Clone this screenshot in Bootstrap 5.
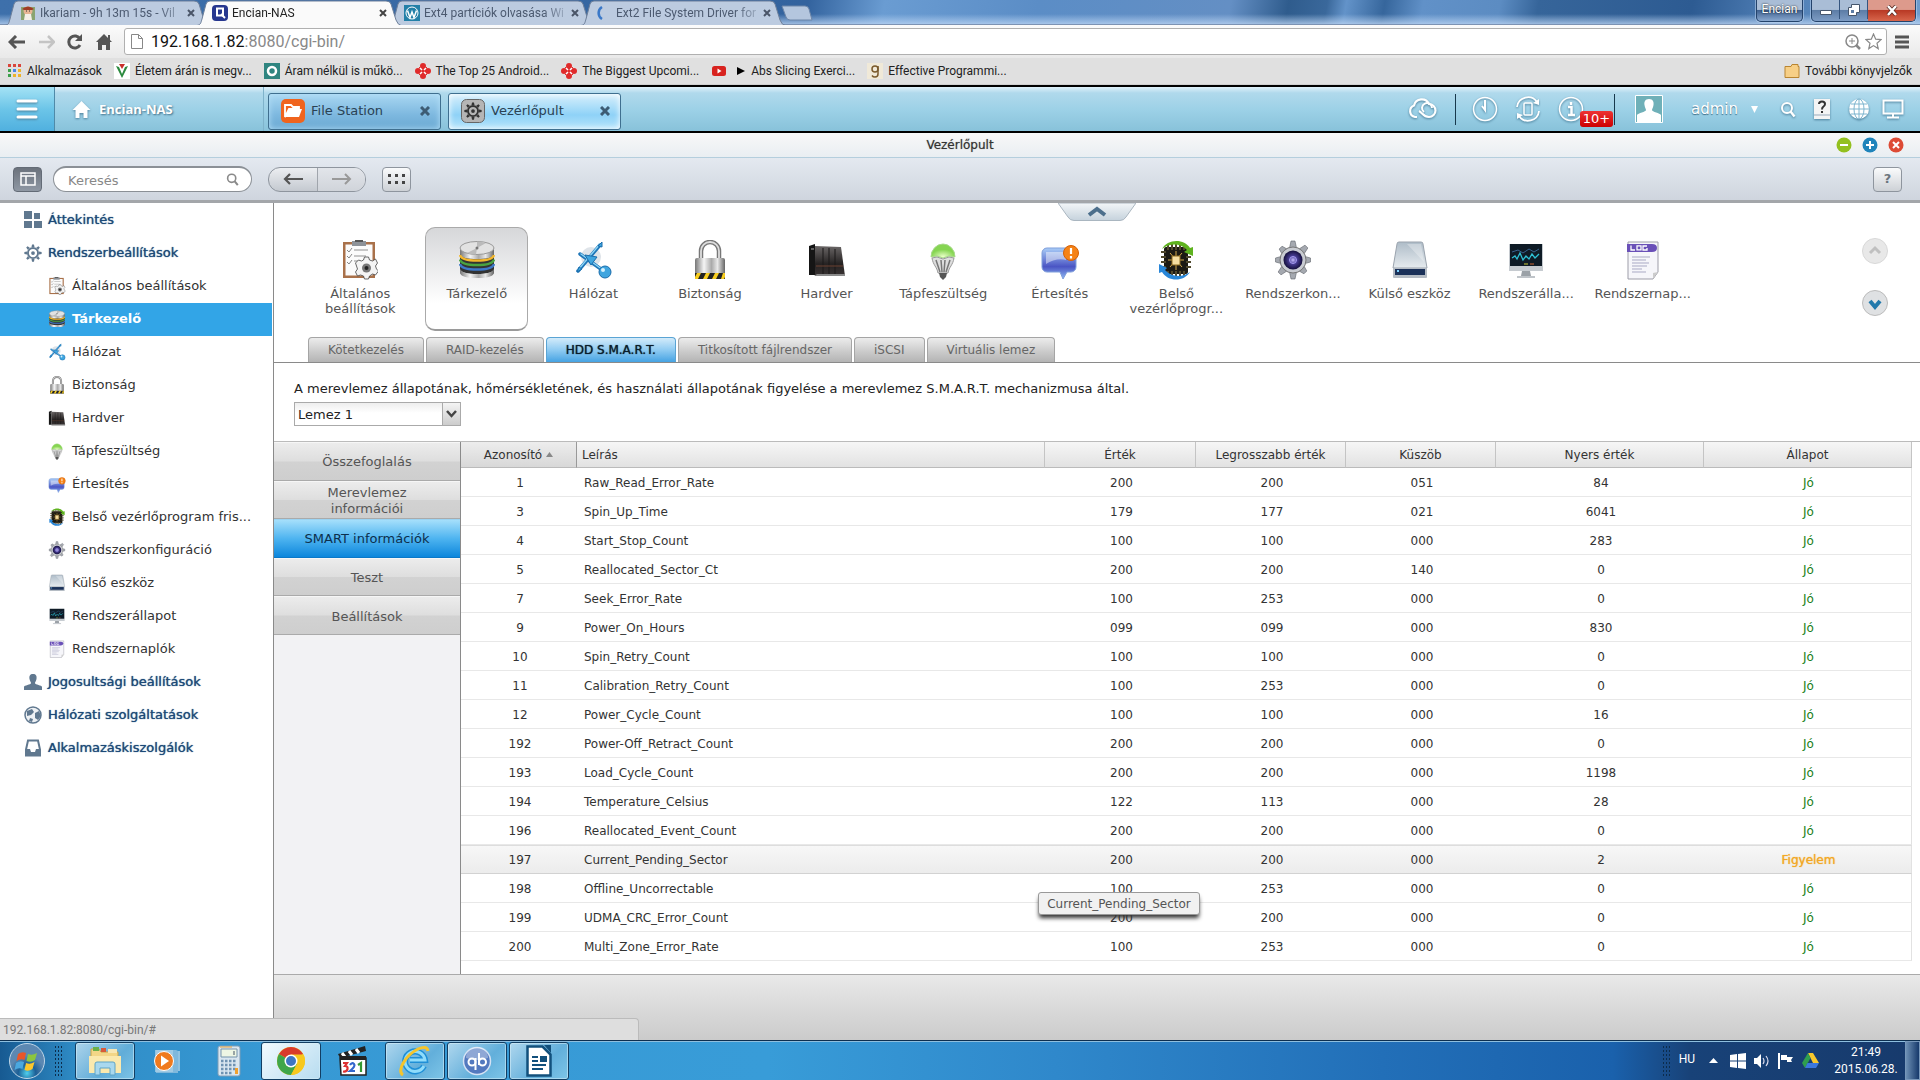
<!DOCTYPE html>
<html lang="hu">
<head>
<meta charset="utf-8">
<meta name="viewport" content="width=device-width, initial-scale=1">
<title>Encian-NAS</title>
<link rel="stylesheet" href="https://cdn.jsdelivr.net/npm/bootstrap@5.3.0/dist/css/bootstrap.min.css">
<style>
:root{--ui:"DejaVu Sans",sans-serif;--chrome:Roboto,"Open Sans",sans-serif}
body{font-family:var(--ui);font-size:13px;line-height:16px;color:#333;background:#fff}
a{color:inherit;text-decoration:none}
button{font-family:inherit}
svg{display:block;flex:none}
.plain{border:0;background:none;padding:0;color:inherit}
/* browser */
.browser-ui{font-family:var(--chrome);font-size:12px}
.tabstrip{height:25px;padding-left:5px;border-bottom:1px solid #7d93b3;background:linear-gradient(180deg,transparent 14px,rgba(190,215,245,.75) 24px),linear-gradient(100deg,#3e70ab 0,#33639e 42%,#6a9cd2 46%,#5b8dc6 54%,#648fc4 64%,#2f5c8d 67%,#3a689b 69%,#6393c9 70%,#36669c 72%,#6191c8 74%,#5c8cc2 78%,#36659a 80%,#2d5b92 88%,#4d7cb3 92%,#6d9ccd 100%)}
.btab{width:204px;height:25px;margin-right:-12px;padding:0 14px 0 15px;color:#4c5a70}
.btab.active{z-index:2;color:#222}
.btab .shape{position:absolute;inset:0;width:100%;height:100%}
.btab>*:not(.shape){position:relative}
.btab .ttl{width:140px;margin-left:4px;white-space:nowrap;-webkit-mask-image:linear-gradient(90deg,#000 85%,rgba(0,0,0,.3))}
.winbtns{height:22px;border:1px solid #24436b;border-top:0;border-radius:0 0 5px 5px;overflow:hidden;box-shadow:0 0 0 1px rgba(200,220,245,.5);background:linear-gradient(#a9bdd6 45%,#5d7da6 50%,#7d9cc4)}
.winbtns button{width:28px;height:19px;border-right:1px solid #35557f}
.winbtns .xbtn{width:47px;height:21px;border:0;background:linear-gradient(#dd9a8c 45%,#b93a25 50%,#d8664c)}
.userbtn{width:47px;height:22px;padding-bottom:4px;line-height:16px;color:#fff;text-shadow:0 0 2px #000;border:1px solid #24436b;border-top:0;border-radius:0 0 5px 5px;background:linear-gradient(#a9bdd6 45%,#3f6190 50%,#8aa9d0);box-shadow:0 0 0 1px rgba(200,220,245,.5)}
.navline{height:33px;padding:0 7px 0 8px;background:linear-gradient(#fbfbfb,#e9e9e9)}
.navicons{width:104px;margin-right:12px}
.omnibox{height:27px;border:1px solid #b0b0b0;border-radius:3px;background:#fff;padding:0 4px 0 6px}
.urlwrap{font-size:16px;line-height:22px;color:#888}
.urlwrap b{font-weight:400;color:#111}
.bookmarks{height:27px;padding:0 8px;background:#e0e0e0;border-bottom:1px solid #d0d0d0;color:#222}
.bookmarks a{gap:5px}
/* NAS desktop bar */
.nasbar{height:48px;border-top:2px solid #000;border-bottom:2px solid #000;background:linear-gradient(#dff1fa 0,#b0d9ec 6px,#9bd0e6 24px,#88c2da 100%);color:#fff}
.menubtn{width:55px;border-right:1px solid #4f8aa8;background:linear-gradient(#a4e2f5,#6cc5e8 50%,#50b0df)}
.homebox{width:209px;padding-left:17px;border-right:1px solid #7fb3cb;font-weight:700;font-size:13px;text-shadow:1px 1px 2px #3c6c86;font-family:"Open Sans",sans-serif}
.tasks{gap:7px}
.taskbtn{width:173px;height:37px;gap:6px;border:1px solid #3f6f8f;border-radius:3px;color:#2a4254;font-size:13px;padding:0 10px 0 12px;background:linear-gradient(#a9d7f2,#7db8df 60%,#6aa8d2);box-shadow:inset 0 0 6px #b5e0f7}
.taskbtn.active{background:linear-gradient(#d8f0fc,#8fd2f7 60%,#b5e4fb);box-shadow:inset 0 0 6px #fff}
.vline{width:1px;height:31px;background:#17384c}
.shadow-ic{filter:drop-shadow(0 1px 1px #4c7f9a)}
.alertbox{padding-right:14px}
.alertcount{left:22px;top:15px;height:16px;line-height:16px;width:33px;font-size:13px;border-radius:3px;background:linear-gradient(#e33,#c00);color:#fff;text-align:center}
.admin{font-size:15px;text-shadow:0 1px 1px #3c6c86}
/* window */
.wtitle{height:25px;border-bottom:1px solid #b4cedd;background:linear-gradient(#f8f8f8,#e9eef2);font-size:12px;color:#333;text-shadow:0 0 1px #888}
.wctl{gap:10px}
.wbar{height:45px;border-bottom:3px solid #a3a6aa;background:linear-gradient(#e4e9f0,#cfd5de);padding:0 18px 0 13px}
.sq{width:29px;height:25px;border:1px solid #8e959e;border-radius:4px;background:linear-gradient(#fafbfc,#cdd1d6)}
.sq.dark{background:linear-gradient(#6b727c,#8f98a4);border-color:#636b76}
.search{width:199px;height:26px;margin-left:11px;border:1px solid #8b9096;border-top-width:2px;border-radius:13px;background:#fff;padding:0 12px 0 14px}
.search input{border:0;outline:0;background:none;width:100%;font-size:13px;padding:2px 0 0}
.search input::placeholder{color:#888;opacity:1}
.navpair{width:98px;height:25px;border:1px solid #8e959e;border-radius:12px;overflow:hidden;background:linear-gradient(#eceef1,#c4c9d0)}
.navpair button+button{border-left:1px solid #a0a5ac;background:linear-gradient(#e2e5ea,#d0d4da)}
.side{width:274px;border-right:1px solid #8a8a8a;padding-top:1px}
.side a{height:33px;gap:6px;white-space:nowrap;padding-bottom:2px}
.side .top{padding-left:24px;color:#1c4a78;text-shadow:0 0 1px #1c4a78}
.side .sub{padding-left:48px}
.side .on{background:#32a5e7;color:#fff;font-weight:700;margin-right:1px}
/* icon grid */
.apps{display:grid;grid-template-columns:repeat(12,1fr);padding:24px 219px 0 28px}
.app{width:103px;height:104px;justify-self:center;padding-top:12px;border:1px solid transparent;border-radius:10px;text-align:center;color:#555;line-height:15px}
.app.on{border-color:#aaa;border-bottom:2px solid #9a9a9a;background:linear-gradient(#d6d7d9,#fff 75%)}
.app svg{margin:0 auto 6px}
.flap{left:50%;transform:translateX(-50%);top:0}
.rounders{right:32px;top:35px;gap:26px}
.stabs{gap:2px;padding:6px 0 0 34px;border-bottom:1px solid #8a8a8a}
.stabs button{height:25px;font-size:12px;padding:0 19px;border:1px solid #a5a5a5;border-bottom:0;border-radius:4px 4px 0 0;background:linear-gradient(#ececec,#c9c9c9 60%,#b4b4b4);color:#666}
.stabs .on{background:linear-gradient(#d3ebfa,#8fcbf2 50%,#46a3e3);color:#0b1d2b;border-color:#5aa4d4;text-shadow:0 0 1px #0b1d2b}
.desc{padding:18px 20px 15px;color:#222}
.pick{width:167px;height:24px;margin-top:5px}
.pick select{width:100%;height:100%;appearance:none;border:1px solid #aaa;border-radius:0;background:linear-gradient(#eee,#fff 10px);padding:0 3px;font:13px var(--ui);color:#222}
.pick span{right:1px;top:1px;bottom:1px;width:18px;border-left:1px solid #aaa;background:linear-gradient(#f4f4f4,#ccc);pointer-events:none}
.split{border-top:1px solid #bbb}
.vtabs{width:187px;border-right:1px solid #8a8a8a;background:#f2f2f4}
.vgrid{display:grid;grid-template-rows:repeat(5,1fr);height:193px}
.vgrid button{border:0;border-bottom:1px solid #aaa;border-top:1px solid #f6f6f6;background:linear-gradient(#ececec,#dedede 49%,#d2d2d2 51%,#cecece);color:#555;line-height:16px;padding:2px 36px 0}
.vgrid .on{background:linear-gradient(#a5dffb,#4eb4f0 50%,#0c86dc);border-color:#9bd3f2 #9bd3f2 #0a78c8;color:#0d2f4d;padding:2px 0 0}
.smart{table-layout:fixed;width:100%;font-size:12px;border-collapse:separate;border-spacing:0;margin:0}
.smart th{height:26px;padding:0;font-weight:400;text-align:center;color:#333;border-bottom:1px solid #bbb;border-right:1px solid #c4c4c4;background:linear-gradient(#f6f6f6,#e2e2e2)}
.smart th.sorted{background:linear-gradient(#ededed,#d8d8d8);border-right-color:#999}
.smart td{height:29px;padding:1px 0 0 2px;text-align:center;color:#333;border-bottom:1px solid #e8e8e8}
.smart td:last-child{border-right:1px solid #e2e2e2}
.smart th:nth-child(2){text-align:left;padding-left:5px}
.smart td:nth-child(2){text-align:left;padding-left:7px}
.smart td.ok{color:#188018}
.smart tr.hov td{background:linear-gradient(#f7f7f7,#ececec);border-top:1px solid #ddd;border-bottom-color:#d2d2d2;padding-top:0}
.smart td.warn{color:#f2a826;text-shadow:0 0 1px #f2a826}
.tip{left:-7px;top:46px;width:162px;height:23px;line-height:22px;background:#f1f1f1;border:1px solid #999;border-radius:3px;box-shadow:0 4px 4px -1px #333;color:#555;z-index:3}
.wfoot{height:66px;border-top:1px solid #aaa;background:linear-gradient(#e9e9e9,#cbcbcb)}
.status{left:0;bottom:0;width:639px;height:22px;padding-left:3px;background:#dedede;border:1px solid #bbb;border-width:1px 1px 0 0;border-radius:0 4px 0 0;color:#777;font:12px/22px var(--chrome)}
/* taskbar */
.taskbar{height:40px;border-top:1px solid #0d2f50;box-shadow:inset 0 1px 0 #8ebfdf;background:linear-gradient(90deg,#175a92 0,#2f8cc6 4%,#3799d4 14%,#389cd8 40%,#2f88cb 55%,#226fb8 72%,#1a61ac 84%,#184278 88%,#173a6c 100%);color:#fff;font-family:var(--chrome);font-size:12px}
.tk{width:60px;height:38px;border:1px solid transparent;border-radius:3px;margin-right:2px;display:flex;align-items:center;justify-content:center;background:none;padding:0}
.tk.run{border-color:#123e63;background:linear-gradient(135deg,#cde6f4cc,#6db4dccc 60%,#8fd0eccc);box-shadow:inset 0 0 0 1px #d8f0fa88}
.tk.front{background:linear-gradient(135deg,#f2fafe,#b7dcf0)}
.grip{width:9px;height:32px;background:radial-gradient(circle,#0c2c4c 1px,transparent 1px) 0 0/3px 4px}
.lang{margin:0 14px 4px 0}
.trayup{margin-right:12px}
.clock{width:78px;line-height:17px;text-align:center}
.peek{width:15px;height:39px;border:1px solid #7797ba;background:linear-gradient(90deg,#6d90b5,#16396b)}
</style>
<script src="https://cdn.jsdelivr.net/npm/bootstrap@5.3.0/dist/js/bootstrap.bundle.min.js"></script>
</head>
<body class="d-flex flex-column min-vh-100">
<svg width="0" height="0" class="position-absolute" aria-hidden="true">
<defs>
<linearGradient id="gm" x1="0" x2="1"><stop offset="0" stop-color="#777"/><stop offset=".3" stop-color="#f5f5f5"/><stop offset=".55" stop-color="#aaa"/><stop offset=".75" stop-color="#e8e8e8"/><stop offset="1" stop-color="#666"/></linearGradient>
<linearGradient id="gv" x2="0" y2="1"><stop offset="0" stop-color="#aebcc8"/><stop offset="1" stop-color="#e6ebef"/></linearGradient>
<linearGradient id="gflap" x2="0" y2="1"><stop offset="0" stop-color="#f3f6f8"/><stop offset="1" stop-color="#c5d2dc"/></linearGradient>
<linearGradient id="ghw" x2="0" y2="1"><stop offset="0" stop-color="#6a6666"/><stop offset=".6" stop-color="#252222"/><stop offset="1" stop-color="#3a3434"/></linearGradient>
<linearGradient id="gbub" x2="0" y2="1"><stop offset="0" stop-color="#a9cdf7"/><stop offset=".6" stop-color="#4a55c4"/><stop offset="1" stop-color="#8fb8f2"/></linearGradient>
<radialGradient id="gbl" cy=".9"><stop offset="0" stop-color="#eaffc8"/><stop offset="1" stop-color="#86d552"/></radialGradient>
<radialGradient id="gorb" cy=".85"><stop offset="0" stop-color="#4fd0ee"/><stop offset=".5" stop-color="#1c5f96"/><stop offset="1" stop-color="#5c88b2"/></radialGradient>
<radialGradient id="glens"><stop offset="0" stop-color="#c8c0ff"/><stop offset=".4" stop-color="#4a3f98"/><stop offset="1" stop-color="#15103c"/></radialGradient>
<symbol id="gear" viewBox="-12 -12 24 24"><g fill="currentColor"><path fill-rule="evenodd" d="M0-8a8 8 0 1 0 0 16A8 8 0 0 0 0-8ZM0-5.500a5.500 5.500 0 1 1 0 11A5.500 5.500 0 0 1 0-5.500Z"/><circle r="2.500"/><g id="teeth"><path d="M-2-8-1.300-11.500H1.300L2-8ZM-2 8-1.300 11.500H1.300L2 8ZM-8-2-11.500-1.300V1.300L-8 2ZM8-2 11.500-1.300V1.300L8 2Z"/></g><use href="#teeth" transform="rotate(45)"/></g></symbol>
<symbol id="i-gen" viewBox="0 0 36 40"><path d="M1 2h32v36H1z" fill="#a9714a"/><path d="M3.500 4.500h27v31h-27z" fill="#fbfbfb"/><path d="M10 1h14v5H10z" fill="#8d9298"/><path d="M13 0h8v2h-8z" fill="#555"/><path d="m5 10 2 2 3-4M5 16l2 2 3-4M5 22l2 2 3-4" fill="none" stroke="#888"/><path d="M12 10h14M12 16h12M12 21h6" stroke="#b5b5b5" stroke-width="1.500"/><g transform="translate(24.500 28)"><g fill="#f4f4f4" stroke="#444" stroke-width=".8"><path d="M-2-11h4l1 3 3 1 3-2 2 4-2 3 1 3 2 2-3 4-3-1-3 2-1 3h-4l-1-3-3-1-3 1-2-4 2-3-1-3-1-3 3-3 3 1 2-1z"/></g><circle r="4.500" fill="#777"/><circle r="2" fill="#222"/></g></symbol>
<symbol id="i-sto" viewBox="0 0 36 40"><path d="M1 8v24c0 3.500 8 6 17 6s17-2.500 17-6V8z" fill="url(#gm)"/><path d="M1 14c0 4 8 5 17 5s17-1 17-5v15c0 3-8 5-17 5S1 32 1 29z" fill="#333"/><g fill="none" stroke-width="2.500"><path d="M1 15c1 4 8 5.500 17 5.500S34 19 35 15" stroke="#f3b72c"/><path d="M1 19.500c1 4 8 5.500 17 5.500s16-1.500 17-5.500" stroke="#4aa341"/><path d="M1 24c1 4 8 5.500 17 5.500S34 28 35 24" stroke="#3d78c9"/></g><path d="M1 29c2 4 8 5 17 5s15-1 17-5v4c-1 4-8 5-17 5S2 37 1 33z" fill="url(#gm)"/><ellipse cx="18" cy="8" rx="17" ry="6.500" fill="#e2e2e2" stroke="#999"/><path d="m18 8-10 5c3 1 6 1.500 9 1.500zM18 8l9-5c-3-1-6-1.500-9-1.500z" fill="#bbb"/><circle cx="18" cy="8" r="1.500" fill="#777"/></symbol>
<symbol id="i-net" viewBox="0 0 36 40"><circle cx="16" cy="17" r="10" fill="#dfe4e9"/><g stroke="#1f76b8" stroke-width="3.500" stroke-linecap="round"><path d="M25 5 3 31M5 14l25 18"/></g><g stroke="#8fd6f6" stroke-width="1.300" stroke-linecap="round"><path d="M25 4 3 30M6 14l22 16"/></g><path d="m10 15 12 2-6 8z" fill="#3fa5df" stroke="#1a6dac"/><circle cx="30" cy="32" r="6" fill="#3fa5df" stroke="#1a6dac"/><path d="M23 6l4-4v5zM2 32l2-5 3 2z" fill="#3fa5df" stroke="#1a6dac"/><circle cx="28" cy="30" r="2" fill="#d5f1fd"/></symbol>
<symbol id="i-sec" viewBox="0 0 36 40"><path d="M9 20V11a9 9 0 0 1 18 0v9" fill="none" stroke="#777" stroke-width="4.500"/><path d="M9 20V11a9 9 0 0 1 18 0v9" fill="none" stroke="#ddd" stroke-width="1.800"/><rect x="3" y="18" width="30" height="21" rx="2" fill="url(#gm)"/><path d="M3 33h30v6H3z" fill="#222"/><path d="M5 33h4l-3 6H3v-2zM14 33h4l-3 6h-4zM23 33h4l-3 6h-4zM31 33h2v4l-1 2h-3z" fill="#f6cc1e"/></symbol>
<symbol id="i-hw" viewBox="0 0 36 40"><path d="M0 6 6 4v31H0z" fill="#151515"/><path d="m6 6 26 1 4 29H6z" fill="url(#ghw)"/><path d="M14 8v26M20 8v26M26 9v25" stroke="#1b1919"/><path d="M7 26h27" stroke="#6a4030"/><path d="M8 34h28v2H5z" fill="#8a8a8a"/><path d="M2 9h3" stroke="#aaa"/></symbol>
<symbol id="i-pow" viewBox="0 0 36 40"><path d="M6 17a12 13 0 1 1 24 0l-6-1-6 2-6-2z" fill="url(#gbl)" stroke="#a7d98a"/><path d="m7 18 5-1 6 2 6-2 5 1c-1 7-5 9-6 15H13c-1-6-5-8-6-15z" fill="#dedede" stroke="#999"/><path d="m11 20 4 12M16 20l1 12M20 20l-1 12M25 20l-4 12" stroke="#777" stroke-width="1.500"/><path d="M14 33h8l-1 4-3 3-3-3z" fill="#555"/></symbol>
<symbol id="i-not" viewBox="0 0 36 40"><path d="M5 8h24a5 5 0 0 1 5 5v14a5 5 0 0 1-5 5h-4l-4 7-3-7H5a5 5 0 0 1-5-5V13a5 5 0 0 1 5-5z" fill="url(#gbub)" stroke="#7f9edb"/><path d="M4 12h20v8c-6-2-14 0-20 4z" fill="#fff" opacity=".45"/><circle cx="29" cy="13" r="7.500" fill="#f58216" stroke="#d46005"/><path d="M29 8v6M29 16v2.500" stroke="#fff" stroke-width="2.200"/></symbol>
<symbol id="i-fw" viewBox="0 0 36 40"><rect x="6" y="7" width="24" height="27" rx="2" fill="#1c1a14"/><path d="M10 4v6M14 4v6M18 4v6M22 4v6M26 4v6M10 31v6M14 31v6M18 31v6M22 31v6M26 31v6M3 12h5M3 17h5M3 22h5M3 27h5M28 12h5M28 17h5M28 22h5M28 27h5" stroke="#50482c" stroke-width="2"/><path d="M18 11v19M10 20h16M12 13l12 14M24 13 12 27" stroke="#d3a84a"/><path d="M14 16h8v9h-8z" fill="#f6dfa2" stroke="#8d6a1e"/><path d="M4 9C9-1 26-2 32 8l3-1v9l-9-4 3-2C22 3 12 3 4 9z" fill="#5fb31f"/><path d="M32 32C26 42 10 42 4 32l-3 1v-9l8 4-2 2c6 7 17 8 25 2z" fill="#2886d8"/></symbol>
<symbol id="i-cfg" viewBox="-18 -20 36 40"><g fill="#a5a9b0" stroke="#60646c" stroke-width=".6"><g id="tt"><path d="M-3.500-12-2-19h4L3.500-12ZM-3.500 12-2 19h4L3.500 12ZM-12-3.500-17.500-2v4L-12 3.500ZM12-3.500 17.500-2v4L12 3.500Z"/></g><use href="#tt" transform="rotate(45)"/></g><circle r="13" fill="#c9ccd2" stroke="#777"/><circle r="9.500" fill="url(#glens)"/><circle r="3.500" fill="none" stroke="#a79df0"/></symbol>
<symbol id="i-ext" viewBox="0 0 36 40"><path d="M5 4q0-2 2-2h22q2 0 2 2l4 24H1z" fill="url(#gv)" stroke="#9aa3ad"/><path d="m15 4 14 0 3 18z" fill="#fff" opacity=".3"/><path d="M1 28h34v9q0 1-1 1H2q-1 0-1-1z" fill="#b5bcc4"/><path d="M3 29h30v6H3z" fill="#1b3159"/><path d="M5 31h2" stroke="#7bd0ff" stroke-width="2"/></symbol>
<symbol id="i-mon" viewBox="0 0 36 40"><path d="M1 4h34v27H1z" fill="#c6cbd0"/><path d="M2 4h32v22H2z" fill="#0f1b26"/><path d="m4 18 3-2 2 3 3-6 3 7 3-4 3 3 3-5 3 4 4-4" fill="none" stroke="#2fc0d4" stroke-width="1.300"/><path d="m4 12 6-2 5 3 6-4 5 3 5-3" fill="none" stroke="#39618c"/><path d="M16 24h4" stroke="#cc3"/><path d="M22 24h4" stroke="#c63"/><path d="M14 31h8l1 5H13z" fill="#9ba1a7"/><path d="M9 36h18v2H9z" fill="#bfc4c9"/></symbol>
<symbol id="i-log" viewBox="0 0 36 40"><path d="M3 2h30v30l-5 7H3z" fill="#f6f6fa" stroke="#9d9da8"/><path d="M2 4h25q5 0 5 4t-5 4H2z" fill="#6a50b8"/><path d="M6 5.500v4.500h4M12 5.800h4v4h-4zM22 6h-4v4h4V8" fill="none" stroke="#fff" stroke-width="1.300"/><path d="M7 17h18M7 20h14M7 23h17M7 26h15M7 29h10M7 32h14" stroke="#a9a9c4"/><path d="m33 32-5 7v-6z" fill="#ccc"/></symbol>
<symbol id="lens" viewBox="0 0 16 16"><circle cx="7" cy="6.500" r="5" fill="none" stroke="currentColor" stroke-width="2"/><path d="m10.500 10 4 5" stroke="currentColor" stroke-width="2.500"/></symbol>
<symbol id="redstar" viewBox="0 0 16 16"><g fill="#e02b2b"><circle cx="8" cy="3" r="3"/><circle cx="8" cy="13" r="3"/><circle cx="3" cy="8" r="3"/><circle cx="13" cy="8" r="3"/><path d="M4 4h8v8H4z"/></g><path d="m5 5 2 2m4-2L9 7M5 11l2-2m4 2L9 9" stroke="#fff" stroke-width="1.500"/></symbol>
<symbol id="tabshape" viewBox="0 0 204 25" preserveAspectRatio="none"><path d="M0 25.500C4 25 4 22 5 19L9 4Q10 1 13 1H189Q193 1 194 4L199 20Q201 25 204 25.500" fill="currentColor" stroke="#6d7f9a"/></symbol>
</defs></svg>

<header class="browser-ui">
<div class="tabstrip d-flex align-items-start">
 <div class="btab position-relative d-flex align-items-center"><svg class="shape" color="#bccbe0"><use href="#tabshape"/></svg><svg width="16" height="16"><path d="M1 2h14v13H1z" fill="#8aa470"/><circle cx="8" cy="6" r="4.500" fill="#e7b593"/><path d="M2 4q6-5 12 0l-2 1H4z" fill="#a03c24"/><path d="M5 9h6l1 6H4z" fill="#f4efe6"/><path d="M6 6h1m2 0h1" stroke="#333"/></svg><span class="ttl">Ikariam - 9h 13m 15s - Vil</span><button class="plain ms-auto" aria-label="Lap bezárása"><svg width="8" height="8"><path d="m1 1 6 6m0-6L1 7" stroke="#4a5568" stroke-width="2"/></svg></button></div>
 <div class="btab active position-relative d-flex align-items-center"><svg class="shape" color="#fafafa"><use href="#tabshape"/></svg><svg width="16" height="16"><rect width="16" height="16" rx="4" fill="#27378f"/><path d="M5 3.500h6v7H5z" fill="none" stroke="#fff" stroke-width="2"/><path d="m9 9 4 4" stroke="#fff" stroke-width="2"/></svg><span class="ttl">Encian-NAS</span><button class="plain ms-auto" aria-label="Lap bezárása"><svg width="8" height="8"><path d="m1 1 6 6m0-6L1 7" stroke="#444" stroke-width="2"/></svg></button></div>
 <div class="btab position-relative d-flex align-items-center"><svg class="shape" color="#bccbe0"><use href="#tabshape"/></svg><svg width="16" height="16"><path d="M0 0h16v16H0z" fill="#2380a8"/><circle cx="8" cy="8" r="6" fill="none" stroke="#fff"/><path d="m3.500 5.500 2.500 7 2-5.500 2 5.500 2.500-7" fill="none" stroke="#fff" stroke-width="1.500"/></svg><span class="ttl">Ext4 partíciók olvasása Wi</span><button class="plain ms-auto" aria-label="Lap bezárása"><svg width="8" height="8"><path d="m1 1 6 6m0-6L1 7" stroke="#4a5568" stroke-width="2"/></svg></button></div>
 <div class="btab position-relative d-flex align-items-center"><svg class="shape" color="#bccbe0"><use href="#tabshape"/></svg><svg width="16" height="16"><path d="M6 2a7 7 0 0 0 0 12" fill="none" stroke="#3a78c8" stroke-width="2.500"/></svg><span class="ttl">Ext2 File System Driver for</span><button class="plain ms-auto" aria-label="Lap bezárása"><svg width="8" height="8"><path d="m1 1 6 6m0-6L1 7" stroke="#4a5568" stroke-width="2"/></svg></button></div>
 <button class="plain ms-2 mt-1" aria-label="Új lap"><svg width="32" height="18"><path d="M1 2h23q3 0 4 3l3 11H9q-3 0-4-3z" fill="#b4c6de" stroke="#6d86a8"/></svg></button>
 <button class="plain userbtn ms-auto me-2">Encian</button>
 <div class="winbtns d-flex me-1">
  <button class="plain d-flex align-items-center justify-content-center" aria-label="Kis méret"><svg width="12" height="12"><path d="M.5 6.500h11v4H.5z" fill="#fff" stroke="#46566c"/></svg></button>
  <button class="plain d-flex align-items-center justify-content-center" aria-label="Előző méret"><svg width="12" height="12"><path d="M3.500.5h8v8h-3v3h-8v-8h3z" fill="#fff" stroke="#46566c"/><path d="M3 6h3v3H3z" fill="#5d7da6"/></svg></button>
  <button class="plain xbtn d-flex align-items-center justify-content-center" aria-label="Bezárás"><svg width="12" height="11"><path d="m2 1 8 9m0-9L2 10" stroke="#5a2a22" stroke-width="4"/><path d="m2 1 8 9m0-9L2 10" stroke="#fff" stroke-width="2.500"/></svg></button>
 </div>
</div>
<div class="navline d-flex align-items-center">
 <div class="navicons d-flex align-items-center justify-content-between">
  <button class="plain" aria-label="Vissza"><svg width="18" height="14"><path d="M8 1 2 7l6 6M2 7h15" fill="none" stroke="#555" stroke-width="3"/></svg></button>
  <button class="plain" aria-label="Előre"><svg width="16" height="14"><path d="m9 1 6 6-6 6m6-6H0" fill="none" stroke="#c4c4c4" stroke-width="2.500"/></svg></button>
  <button class="plain" aria-label="Frissítés"><svg width="16" height="16"><path d="M13 11a6 6 0 1 1 0-6" fill="none" stroke="#555" stroke-width="3"/><path d="M15 0v7H8z" fill="#555"/></svg></button>
  <button class="plain" aria-label="Kezdőlap"><svg width="16" height="16"><path d="M8 0 0 8h2v8h4v-5h4v5h4V8h2l-2-2V1h-2v3z" fill="#555"/></svg></button>
 </div>
 <div class="omnibox d-flex align-items-center flex-grow-1">
  <svg width="12" height="15"><path d="M.5.5h7l4 4v10H.5zM7.500.5v4h4" fill="#fff" stroke="#888"/></svg>
  <a href="#" class="urlwrap ms-2 me-auto"><b>192.168.1.82</b>:8080/cgi-bin/</a>
  <svg width="16" height="16" class="me-1"><circle cx="7" cy="7" r="6" fill="none" stroke="#888" stroke-width="1.500"/><path d="M4 7h6M7 4v6" stroke="#888"/><path d="m11 11 4 4" stroke="#888" stroke-width="2.500"/></svg>
  <svg width="17" height="17"><path d="m8.500 1 2.200 5.200 5.300.4-4 3.600 1.200 5.400-4.700-3-4.700 3L5 10.200 1 6.600l5.300-.4z" fill="none" stroke="#888" stroke-width="1.200"/></svg>
 </div>
 <button class="plain ms-2 me-1" aria-label="Menü"><svg width="14" height="14"><path d="M0 2h14M0 7h14M0 12h14" stroke="#555" stroke-width="3"/></svg></button>
</div>
<nav class="bookmarks d-flex align-items-center">
 <a href="#" class="d-flex align-items-center me-2 pe-1"><svg width="14" height="14"><path d="M0 0h3v3H0zM5 0h3v3H5zM10 0h3v3h-3z" fill="#d9453b"/><path d="M0 5h3v3H0z" fill="#3da04b"/><path d="M5 5h3v3H5z" fill="#4a86e8"/><path d="M10 5h3v3h-3zM10 10h3v3h-3zM5 10h3v3H5z" fill="#edb32b"/><path d="M0 10h3v3H0z" fill="#3da04b"/></svg>Alkalmazások</a>
 <a href="#" class="d-flex align-items-center me-2 pe-1"><svg width="16" height="16"><path d="M0 0h16v16H0z" fill="#fff"/><path d="m2 3 6 12 6-12-3 1-3 7-3-7z" fill="#2c8a3f"/><path d="m5 1 3 5 3-5z" fill="#c9302c"/></svg>Életem árán is megv...</a>
 <a href="#" class="d-flex align-items-center me-2 pe-1"><svg width="16" height="16"><path d="M0 0h16v16H0z" fill="#2f8580"/><circle cx="8" cy="8" r="4" fill="none" stroke="#fff" stroke-width="2.500"/></svg>Áram nélkül is műkö...</a>
 <a href="#" class="d-flex align-items-center me-2 pe-1"><svg width="16" height="16"><use href="#redstar"/></svg>The Top 25 Android...</a>
 <a href="#" class="d-flex align-items-center me-2 pe-1"><svg width="16" height="16"><use href="#redstar"/></svg>The Biggest Upcomi...</a>
 <a href="#" class="d-flex align-items-center me-2 pe-1"><svg width="16" height="16"><rect x="1" y="3" width="14" height="10" rx="2.500" fill="#d8231f"/><path d="m6.500 5.500 4 2.500-4 2.500z" fill="#fff"/></svg><svg width="10" height="10" class="ms-1"><path d="m1 1 8 4-8 4z" fill="#000"/></svg>Abs Slicing Exerci...</a>
 <a href="#" class="d-flex align-items-center"><svg width="16" height="16"><path d="M0 0h16v16H0z" fill="#f0e9d8"/><g fill="none" stroke="#7a5a2c" stroke-width="1.500"><circle cx="8" cy="6" r="3"/><path d="M11 3v8q0 3-3 3-2 0-3-1.500"/></g></svg>Effective Programmi...</a>
 <a href="#" class="d-flex align-items-center ms-auto"><svg width="16" height="14"><path d="M1 2.500h6l1-2h6v2h1v11H1z" fill="#f7cf86" stroke="#b98530"/></svg>További könyvjelzők</a>
</nav>
</header>

<div class="nasbar d-flex align-items-stretch">
 <button class="plain menubtn d-flex align-items-center justify-content-center" aria-label="Főmenü"><svg width="22" height="20" class="shadow-ic"><path d="M2 2h18M2 10h18M2 18h18" stroke="#fff" stroke-width="3" stroke-linecap="round"/></svg></button>
 <a href="#" class="homebox d-flex align-items-center gap-2"><svg width="19" height="19" class="shadow-ic"><path d="m9.500 1 9 9h-3v8H11.500v-5h-4v5h-4v-8h-3z" fill="#fff"/></svg>Encian-NAS</a>
 <div class="tasks d-flex align-items-center ms-1 pt-1">
  <div class="taskbtn d-flex align-items-center"><svg width="24" height="24"><rect width="24" height="24" rx="5" fill="#f0641e"/><path d="M4 18V6h6l2 2h6v2H8z" fill="none" stroke="#fff" stroke-width="1.800"/><path d="m4 18 4-8h13l-3 8z" fill="#fff"/></svg><span>File Station</span><button class="plain ms-auto" aria-label="Bezárás"><svg width="10" height="10"><path d="m1 1 8 8m0-8L1 9" stroke="#3d5c74" stroke-width="3"/></svg></button></div>
  <div class="taskbtn active d-flex align-items-center"><svg width="24" height="24"><rect x=".5" y=".5" width="23" height="23" rx="5" fill="#b5b5b5" stroke="#666"/><svg x="3" y="3" width="18" height="18" color="#333"><use href="#gear"/></svg></svg><span>Vezérlőpult</span><button class="plain ms-auto" aria-label="Bezárás"><svg width="10" height="10"><path d="m1 1 8 8m0-8L1 9" stroke="#3d5c74" stroke-width="3"/></svg></button></div>
 </div>
 <div class="d-flex align-items-center ms-auto me-3">
  <svg width="32" height="24" class="shadow-ic me-3"><path d="M10 20H8a6 6 0 0 1-1-11.500A8 8 0 0 1 22 7a6.500 6.500 0 0 1 0 13c-6 0-6-4-10-6" fill="none" stroke="#fff" stroke-width="2.200"/><path d="M17 15a5 5 0 1 1 8-4" fill="none" stroke="#fff" stroke-width="2"/></svg>
  <span class="vline me-3"></span>
  <svg width="26" height="26" class="shadow-ic me-3"><circle cx="13" cy="13" r="11.500" fill="none" stroke="#fff" stroke-width="1.500"/><path d="M13 4v10l-3-4" fill="none" stroke="#fff" stroke-width="2"/></svg>
  <svg width="28" height="28" class="shadow-ic me-3"><path d="M3 12A11 11 0 0 1 23 7M25 16A11 11 0 0 1 5 21" fill="none" stroke="#fff" stroke-width="1.800"/><path d="m25 4 0 6-6-2zM3 24v-6l6 2z" fill="#fff"/><rect x="10" y="8" width="8" height="12" rx="1" fill="none" stroke="#fff" stroke-width="1.500"/></svg>
  <div class="alertbox position-relative me-3"><svg width="26" height="26" class="shadow-ic"><circle cx="13" cy="13" r="11.500" fill="none" stroke="#fff" stroke-width="1.500"/><path d="M13 6v3M10 11h3.500v8M10 19h7" fill="none" stroke="#fff" stroke-width="2.500"/></svg><span class="alertcount position-absolute">10+</span></div>
  <span class="vline me-3"></span>
  <svg width="28" height="28" class="ms-1 me-4"><path d="M.5.5h27v27H.5z" fill="#6fb0b8" stroke="#fff"/><path d="M14 4c4 0 5 3 4.500 6-.5 3-1.500 4-1.500 5 0 2 8 3 9 5v7H2v-7c1-2 9-3 9-5 0-1-1-2-1.500-5C9 7 10 4 14 4z" fill="#fff"/></svg>
  <a href="#" class="admin ms-1 me-2">admin</a>
  <svg width="10" height="8" class="ms-1 me-3"><path d="M1 1h7L4.500 8z" fill="#fff"/></svg>
  <svg width="16" height="17" class="shadow-ic ms-1 me-3"><use href="#lens"/></svg>
  <svg width="20" height="20" class="shadow-ic me-3"><path d="M2 0h16v20H2z" fill="#f4f4f4"/><path d="M2 16h16" stroke="#9ab"/><path d="M7 5q0-2.500 3-2.500T13 5q0 1.500-1.500 2.500T10 10.500M10 12v2" fill="none" stroke="#333" stroke-width="2"/></svg>
  <svg width="22" height="22" class="shadow-ic me-2"><circle cx="11" cy="11" r="10" fill="#fff"/><path d="M11 1v20M1 11h20M3 6h16M3 16h16" stroke="#7fb6cf"/><ellipse cx="11" cy="11" rx="5" ry="10" fill="none" stroke="#7fb6cf"/></svg>
  <svg width="22" height="20" class="shadow-ic ms-1"><path d="M1.500 1.500h19v13h-19zM11 15v3M5 18.500h12" fill="none" stroke="#fff" stroke-width="2"/></svg>
 </div>
</div>

<div class="wtitle position-relative d-flex align-items-center justify-content-center">
 Vezérlőpult
 <div class="wctl position-absolute end-0 me-3 d-flex">
  <button class="plain" aria-label="Kicsinyít"><svg width="16" height="16"><circle cx="8" cy="8" r="7.500" fill="#93c01f"/><path d="M4 8h8" stroke="#fff" stroke-width="2"/></svg></button>
  <button class="plain" aria-label="Nagyít"><svg width="16" height="16"><circle cx="8" cy="8" r="7.500" fill="#1f84bb"/><path d="M4 8h8M8 4v8" stroke="#fff" stroke-width="2"/></svg></button>
  <button class="plain" aria-label="Bezár"><svg width="16" height="16"><circle cx="8" cy="8" r="7.500" fill="#dd4b35"/><path d="m5 5 6 6m0-6-6 6" stroke="#fff" stroke-width="2"/></svg></button>
 </div>
</div>
<div class="wbar d-flex align-items-center">
 <button class="sq dark p-0 d-flex align-items-center justify-content-center" aria-label="Oldalsáv"><svg width="16" height="14"><path d="M1 1h14v12H1zM1 4h14M6 4v9" fill="none" stroke="#fff" stroke-width="1.500"/></svg></button>
 <label class="search d-flex align-items-center me-3"><input type="text" placeholder="Keresés" aria-label="Keresés"><svg width="13" height="13" color="#8a8a8a"><use href="#lens"/></svg></label>
 <div class="navpair d-flex me-3"><button class="plain w-50 d-flex align-items-center justify-content-center" aria-label="Vissza"><svg width="20" height="12"><path d="M7 1 2 6l5 5M2 6h18" fill="none" stroke="#555" stroke-width="2.200"/></svg></button><button class="plain w-50 d-flex align-items-center justify-content-center" aria-label="Előre"><svg width="20" height="12"><path d="m13 1 5 5-5 5m5-5H0" fill="none" stroke="#999" stroke-width="2"/></svg></button></div>
 <button class="sq p-0 d-flex align-items-center justify-content-center" aria-label="Rács"><svg width="17" height="10"><path d="M0 0h3v3H0zM7 0h3v3H7zM14 0h3v3h-3zM0 7h3v3H0zM7 7h3v3H7zM14 7h3v3h-3z" fill="#444"/></svg></button>
 <button class="sq p-0 ms-auto fw-bold text-secondary" aria-label="Súgó">?</button>
</div>

<main class="d-flex flex-grow-1 position-relative">
 <nav class="side flex-shrink-0 d-flex flex-column">
  <a href="#" class="top d-flex align-items-center"><svg width="18" height="18"><path d="M0 0h8v8H0zM10 2h6v6h-6zM0 10h8v7H0zM10 10h8v7h-8z" fill="#60788f"/></svg>Áttekintés</a>
  <a href="#" class="top d-flex align-items-center"><svg width="18" height="18" color="#60788f"><use href="#gear"/></svg>Rendszerbeállítások</a>
  <a href="#" class="sub d-flex align-items-center"><svg width="18" height="18"><use href="#i-gen"/></svg>Általános beállítások</a>
  <a href="#" class="sub on d-flex align-items-center"><svg width="18" height="18"><use href="#i-sto"/></svg>Tárkezelő</a>
  <a href="#" class="sub d-flex align-items-center"><svg width="18" height="18"><use href="#i-net"/></svg>Hálózat</a>
  <a href="#" class="sub d-flex align-items-center"><svg width="18" height="18"><use href="#i-sec"/></svg>Biztonság</a>
  <a href="#" class="sub d-flex align-items-center"><svg width="18" height="18"><use href="#i-hw"/></svg>Hardver</a>
  <a href="#" class="sub d-flex align-items-center"><svg width="18" height="18"><use href="#i-pow"/></svg>Tápfeszültség</a>
  <a href="#" class="sub d-flex align-items-center"><svg width="18" height="18"><use href="#i-not"/></svg>Értesítés</a>
  <a href="#" class="sub d-flex align-items-center"><svg width="18" height="18"><use href="#i-fw"/></svg>Belső vezérlőprogram fris...</a>
  <a href="#" class="sub d-flex align-items-center"><svg width="18" height="18"><use href="#i-cfg"/></svg>Rendszerkonfiguráció</a>
  <a href="#" class="sub d-flex align-items-center"><svg width="18" height="18"><use href="#i-ext"/></svg>Külső eszköz</a>
  <a href="#" class="sub d-flex align-items-center"><svg width="18" height="18"><use href="#i-mon"/></svg>Rendszerállapot</a>
  <a href="#" class="sub d-flex align-items-center"><svg width="18" height="18"><use href="#i-log"/></svg>Rendszernaplók</a>
  <a href="#" class="top d-flex align-items-center"><svg width="18" height="18"><path d="M9 1c3 0 4 2 3.500 5-.3 2-1.500 3-1.500 4 0 2 7 2 7 4v3H0v-3c0-2 7-2 7-4 0-1-1.200-2-1.500-4C5 3 6 1 9 1z" fill="#60788f"/></svg>Jogosultsági beállítások</a>
  <a href="#" class="top d-flex align-items-center"><svg width="18" height="18"><circle cx="9" cy="9" r="8" fill="#eef1f4" stroke="#60788f" stroke-width="1.500"/><path d="M3 5 8 3l2 3-3 3-4 1zM11 7l4-2 2 5-3 4-3-2zM6 12l3 1-1 3-3-1z" fill="#60788f"/></svg>Hálózati szolgáltatások</a>
  <a href="#" class="top d-flex align-items-center"><svg width="18" height="18"><path d="M4 1.500h10l2 9v6H2v-6z" fill="#fff" stroke="#60788f" stroke-width="2"/><path d="M2 10h4l1 3h4l1-3h4v6H2z" fill="#60788f"/></svg>Alkalmazáskiszolgálók</a>
 </nav>

 <section class="flex-grow-1 d-flex flex-column overflow-hidden">
  <div class="position-relative">
   <button class="plain flap position-absolute" aria-label="Összecsukás"><svg width="78" height="18"><path d="M0 0h78l-10 14q-2 3.500-6 3.500H16q-4 0-6-3.500z" fill="url(#gflap)" stroke="#aab6c0"/><path d="m31 12 8-6 8 6" fill="none" stroke="#4c6f8c" stroke-width="4"/></svg></button>
   <div class="apps">
    <a href="#" class="app"><svg width="36" height="40"><use href="#i-gen"/></svg>Általános beállítások</a>
    <a href="#" class="app on"><svg width="36" height="40"><use href="#i-sto"/></svg>Tárkezelő</a>
    <a href="#" class="app"><svg width="40" height="40"><use href="#i-net"/></svg>Hálózat</a>
    <a href="#" class="app"><svg width="36" height="40"><use href="#i-sec"/></svg>Biztonság</a>
    <a href="#" class="app"><svg width="38" height="40"><use href="#i-hw"/></svg>Hardver</a>
    <a href="#" class="app"><svg width="36" height="40"><use href="#i-pow"/></svg>Tápfeszültség</a>
    <a href="#" class="app"><svg width="40" height="40"><use href="#i-not"/></svg>Értesítés</a>
    <a href="#" class="app"><svg width="38" height="40"><use href="#i-fw"/></svg>Belső vezérlőprogr...</a>
    <a href="#" class="app"><svg width="38" height="40"><use href="#i-cfg"/></svg>Rendszerkon...</a>
    <a href="#" class="app"><svg width="40" height="40"><use href="#i-ext"/></svg>Külső eszköz</a>
    <a href="#" class="app"><svg width="38" height="40"><use href="#i-mon"/></svg>Rendszerálla...</a>
    <a href="#" class="app"><svg width="36" height="40"><use href="#i-log"/></svg>Rendszernap...</a>
   </div>
   <div class="rounders position-absolute d-flex flex-column">
    <button class="plain" aria-label="Fel"><svg width="26" height="26"><circle cx="13" cy="13" r="12.500" fill="#e8e8e8" stroke="#d8d8d8"/><path d="m8 15 5-5 5 5" fill="none" stroke="#c0c0c0" stroke-width="3"/></svg></button>
    <button class="plain" aria-label="Le"><svg width="26" height="26"><circle cx="13" cy="13" r="12.500" fill="#dfe1e3" stroke="#bbb"/><path d="m8 11 5 6 5-6" fill="none" stroke="#2179ac" stroke-width="4"/></svg></button>
   </div>
  </div>
  <div class="stabs d-flex"><button>Kötetkezelés</button><button>RAID-kezelés</button><button class="on">HDD S.M.A.R.T.</button><button>Titkosított fájlrendszer</button><button>iSCSI</button><button>Virtuális lemez</button></div>
  <div class="desc"><label for="disk">A merevlemez állapotának, hőmérsékletének, és használati állapotának figyelése a merevlemez S.M.A.R.T. mechanizmusa által.</label>
   <div class="pick position-relative"><select id="disk"><option>Lemez 1</option></select><span class="position-absolute d-flex align-items-center justify-content-center"><svg width="11" height="8"><path d="m1 1 4.500 5L10 1" fill="none" stroke="#444" stroke-width="2.500"/></svg></span></div>
  </div>
  <div class="split d-flex flex-grow-1">
   <div class="vtabs flex-shrink-0"><div class="vgrid"><button>Összefoglalás</button><button>Merevlemez információi</button><button class="on">SMART információk</button><button>Teszt</button><button>Beállítások</button></div></div>
   <div class="flex-grow-1 pe-2">
    <table class="smart">
     <colgroup><col style="width:116px"><col><col style="width:151px"><col style="width:150px"><col style="width:150px"><col style="width:208px"><col style="width:208px"></colgroup>
     <thead><tr><th class="sorted"><span class="d-inline-flex align-items-center gap-1">Azonosító<svg width="7" height="5"><path d="M0 5 3.500 0 7 5z" fill="#888"/></svg></span></th><th>Leírás</th><th>Érték</th><th>Legrosszabb érték</th><th>Küszöb</th><th>Nyers érték</th><th>Állapot</th></tr></thead>
     <tbody>
     <tr><td>1</td><td>Raw_Read_Error_Rate</td><td>200</td><td>200</td><td>051</td><td>84</td><td class="ok">Jó</td></tr>
     <tr><td>3</td><td>Spin_Up_Time</td><td>179</td><td>177</td><td>021</td><td>6041</td><td class="ok">Jó</td></tr>
     <tr><td>4</td><td>Start_Stop_Count</td><td>100</td><td>100</td><td>000</td><td>283</td><td class="ok">Jó</td></tr>
     <tr><td>5</td><td>Reallocated_Sector_Ct</td><td>200</td><td>200</td><td>140</td><td>0</td><td class="ok">Jó</td></tr>
     <tr><td>7</td><td>Seek_Error_Rate</td><td>100</td><td>253</td><td>000</td><td>0</td><td class="ok">Jó</td></tr>
     <tr><td>9</td><td>Power_On_Hours</td><td>099</td><td>099</td><td>000</td><td>830</td><td class="ok">Jó</td></tr>
     <tr><td>10</td><td>Spin_Retry_Count</td><td>100</td><td>100</td><td>000</td><td>0</td><td class="ok">Jó</td></tr>
     <tr><td>11</td><td>Calibration_Retry_Count</td><td>100</td><td>253</td><td>000</td><td>0</td><td class="ok">Jó</td></tr>
     <tr><td>12</td><td>Power_Cycle_Count</td><td>100</td><td>100</td><td>000</td><td>16</td><td class="ok">Jó</td></tr>
     <tr><td>192</td><td>Power-Off_Retract_Count</td><td>200</td><td>200</td><td>000</td><td>0</td><td class="ok">Jó</td></tr>
     <tr><td>193</td><td>Load_Cycle_Count</td><td>200</td><td>200</td><td>000</td><td>1198</td><td class="ok">Jó</td></tr>
     <tr><td>194</td><td>Temperature_Celsius</td><td>122</td><td>113</td><td>000</td><td>28</td><td class="ok">Jó</td></tr>
     <tr><td>196</td><td>Reallocated_Event_Count</td><td>200</td><td>200</td><td>000</td><td>0</td><td class="ok">Jó</td></tr>
     <tr class="hov"><td>197</td><td>Current_Pending_Sector</td><td class="position-relative">200<span class="tip position-absolute">Current_Pending_Sector</span></td><td>200</td><td>000</td><td>2</td><td class="warn">Figyelem</td></tr>
     <tr><td>198</td><td>Offline_Uncorrectable</td><td>100</td><td>253</td><td>000</td><td>0</td><td class="ok">Jó</td></tr>
     <tr><td>199</td><td>UDMA_CRC_Error_Count</td><td>200</td><td>200</td><td>000</td><td>0</td><td class="ok">Jó</td></tr>
     <tr><td>200</td><td>Multi_Zone_Error_Rate</td><td>100</td><td>253</td><td>000</td><td>0</td><td class="ok">Jó</td></tr>
     </tbody>
    </table>
   </div>
  </div>
  <div class="wfoot"></div>
 </section>
 <div class="status position-absolute">192.168.1.82:8080/cgi-bin/#</div>
</main>

<footer class="taskbar d-flex align-items-center">
 <button class="plain ms-2" aria-label="Start"><svg width="38" height="38"><circle cx="19" cy="19" r="17.500" fill="url(#gorb)" stroke="#bfd6e8"/><path d="M10 12q4-3 8-1l-1.500 7q-4-2-8 1z" fill="#e8562a"/><path d="M20 12q4 2 9-1l-2 7q-4 3-8.500 1z" fill="#8cc63f"/><path d="M8 21q4-3 8-1l-1.500 7q-4-2-8 1z" fill="#4aa8e0"/><path d="M18 21q4 2 8.500-1l-2 7q-4 3-8 1z" fill="#fcc72c"/></svg></button>
 <span class="grip ms-2 ps-1 me-2"></span>
 <button class="tk run ms-1" aria-label="Intéző"><svg width="34" height="32"><path d="M3 4h8l2 3h17v20H3z" fill="#f3d687" stroke="#c9a349"/><path d="M5 2h6v4H5z" fill="#6bb04a"/><path d="M13 3h5v4h-5z" fill="#d85a3a"/><path d="M20 4h9v4h-9z" fill="#f8e7b4"/><path d="M1 11h32v17H1z" fill="#fbe9ae"/><path d="M7 30V19q0-2 2-2h16q2 0 2 2v11h-5v-7H12v7z" fill="#a9d8ee" stroke="#5fa4c6"/></svg></button>
 <button class="tk" aria-label="Lejátszó"><svg width="30" height="28"><path d="M4 3h20l2 1v22H4z" fill="#7fb8dc"/><path d="M26 4h2v20h-2zM3 3h18v22H3z" fill="#a7cee6" opacity=".8"/><circle cx="12" cy="14" r="9.500" fill="#f07a1e" stroke="#fff"/><path d="m9 8.500 8 5.500-8 5.500z" fill="#fff"/></svg></button>
 <button class="tk" aria-label="Számológép"><svg width="24" height="32"><rect x="1" y="1" width="22" height="30" rx="2" fill="#d9e6f0" stroke="#7f9db6"/><path d="M4 4h16v8H4z" fill="#eef6e4" stroke="#7593ac"/><path d="M3 2h12" stroke="#e9a23b"/><path d="M17 6v4" stroke="#456"/><g stroke="#6f92b2" stroke-width="2.500" stroke-dasharray="2.500 1.500"><path d="M4 16h16M4 20h16M4 24h16M4 28h12"/></g><path d="M18 23h3v6h-3z" fill="#f0a030"/></svg></button>
 <button class="tk run front" aria-label="Chrome"><svg width="30" height="30" viewBox="-15 -15 30 30"><circle r="14" fill="#f7c81e"/><path d="M0 0-12.100-7A14 14 0 0 1 12.100-7Z" fill="#d93a2b"/><path d="M-12.100-7A14 14 0 0 0 0 14L6 3 0 0Z" fill="#3fa64a"/><path d="M0-6.500h12.400A14 14 0 0 1 0 14L6 3Z" fill="#f7c81e"/><circle r="6.500" fill="#fff"/><circle r="5" fill="#3f76c4"/></svg></button>
 <button class="tk" aria-label="Media Player Classic"><svg width="32" height="32"><path d="m1 9 27-8 1 5L3 13z" fill="#222"/><path d="m5 8 3 4M12 6l3 4M19 4l3 4" stroke="#fff" stroke-width="3"/><path d="M3 13h26v17H4z" fill="#fff" stroke="#222" stroke-width="1.500"/><path d="M3 11h26v4H3z" fill="#222"/><g fill="none" stroke-width="2.200"><path d="M6 18h4l-2 3q3 0 2.500 3T6 26.500" stroke="#d33"/><path d="M13 20q2-3 4-1t-4 7h5" stroke="#36c"/><path d="m21 20 3-2v9" stroke="#393"/></g></svg></button>
 <button class="tk run" aria-label="Internet Explorer"><svg width="34" height="34"><path d="M26 22a10 10 0 1 1 1-6H12" fill="none" stroke="#1f8fd6" stroke-width="6"/><path d="M26 22a10 10 0 1 1 1-6H12" fill="none" stroke="#8fdcfb" stroke-width="3"/><path d="M5 31C-2 27 8 11 20 5q9-4 10 2" fill="none" stroke="#f4c42c" stroke-width="3"/></svg></button>
 <button class="tk run" aria-label="qBittorrent"><svg width="30" height="30"><circle cx="15" cy="15" r="13.500" fill="#5379bf" stroke="#d5e2f4" stroke-width="1.500"/><path d="M4 12a11 11 0 0 1 22 0q-11 4-22 0z" fill="#fff" opacity=".35"/><g fill="none" stroke="#fff" stroke-width="2"><circle cx="10" cy="16" r="3.500"/><path d="M13.500 12v12M17 7v12"/><circle cx="20.500" cy="16" r="3.500"/></g></svg></button>
 <button class="tk run" aria-label="Writer"><svg width="26" height="32"><path d="M1.500 1.500h15l8 8v21h-23z" fill="#fff" stroke="#12507c" stroke-width="2.500"/><path d="M18 0h7v8z" fill="#12507c"/><path d="M6 12h6M6 16h6M6 20h14M6 24h11" stroke="#12507c" stroke-width="2"/><path d="M14 11h7v6h-7z" fill="#12507c"/></svg></button>
 <div class="d-flex align-items-center ms-auto">
  <span class="grip me-2"></span><span class="lang">HU</span>
  <svg width="9" height="5" class="trayup"><path d="M0 5 4.500 0 9 5z" fill="#fff"/></svg>
  <svg width="16" height="16" class="me-2"><path d="m0 2 7-1v6.500H0zM8 1l8-1v7.500H8zM0 8.500h7V15l-7-1zM8 8.500h8V16l-8-1z" fill="#fff"/></svg>
  <svg width="16" height="14" class="me-2"><path d="M0 4h3l4-4v14l-4-4H0z" fill="#fff"/><path d="M9 4q2 3 0 6M12 2q4 5 0 10" fill="none" stroke="#dde" stroke-width="1.200"/></svg>
  <svg width="16" height="16" class="me-2"><path d="M1 0v16" stroke="#fff" stroke-width="2"/><path d="M3 2h6v2h6l-2 3 1 2H9V7H3z" fill="#fff"/></svg>
  <svg width="17" height="15" class="me-2"><path d="m6 0 5 0 6 10h-6z" fill="#f8c72c"/><path d="M6 0 0 10l3 5 5.500-10z" fill="#2f9e4e"/><path d="M5.500 10H17l-3 5H3z" fill="#3b77dd"/></svg>
  <div class="clock"><div>21:49</div><div>2015.06.28.</div></div>
  <button class="peek p-0" aria-label="Asztal megjelenítése"></button>
 </div>
</footer>
</body>
</html>
